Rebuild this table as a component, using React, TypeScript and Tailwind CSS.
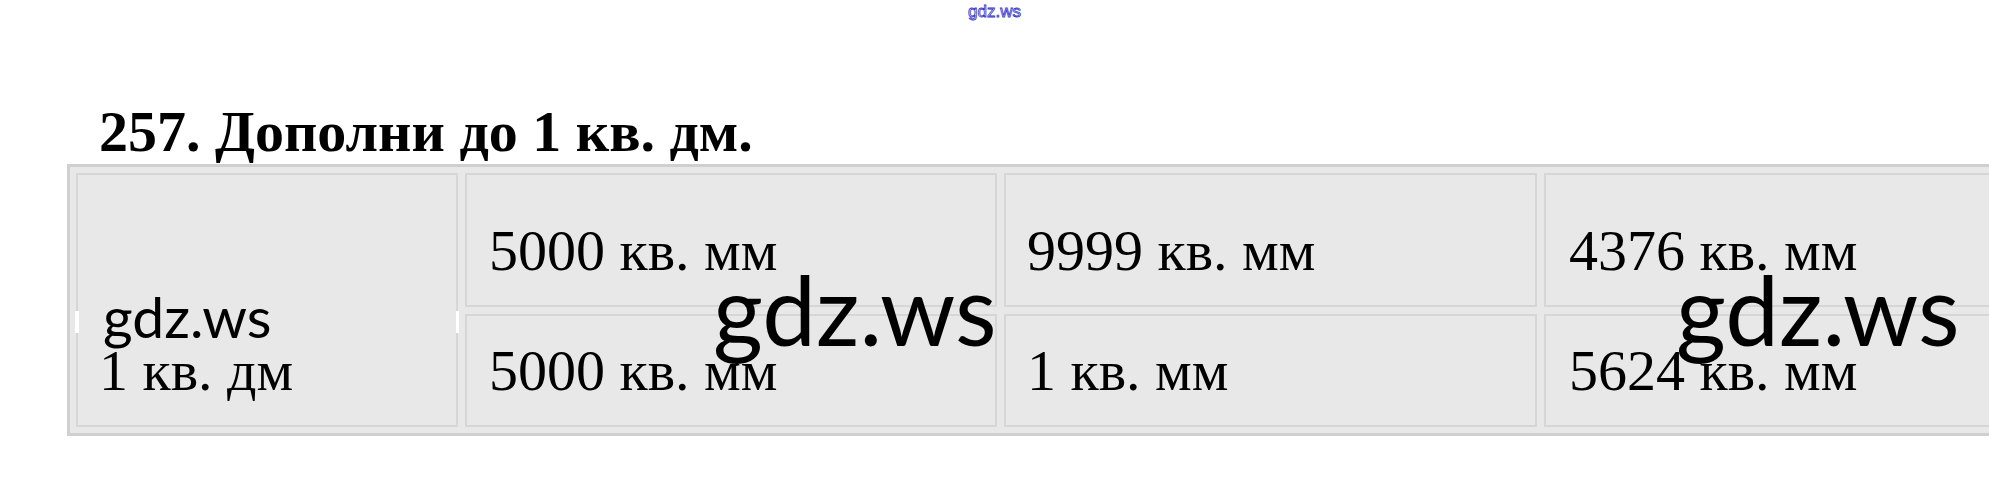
import React from "react";

const serif = { fontFamily: '"Liberation Serif", "Times New Roman", serif' };
const lato = { fontFamily: 'Lato, "Open Sans", sans-serif' };

const rows = [
  ["5000 кв. мм", "9999 кв. мм", "4376 кв. мм"],
  ["5000 кв. мм", "1 кв. мм", "5624 кв. мм"],
];

const padLeft = ["pl-[22px]", "pl-[21px]", "pl-[23px]"];

const Cell = ({ text, col }: { text: string; col: number }) => (
  <div
    className={`flex items-end border-2 border-[#d6d6d6] bg-[#e8e8e8] pb-[25px] ${padLeft[col]}`}
  >
    <span className="text-[58px] leading-[58px] text-black whitespace-nowrap" style={serif}>
      {text}
    </span>
  </div>
);

const App = () => {
  return (
    <div className="w-[1989px] h-[497px] bg-white overflow-hidden">
      <div className="h-[19px] pt-[2px] text-center text-[17px] leading-[17px]">
        <span
          className="text-[#e8e8ff] [-webkit-text-stroke:0.8px_#3434c8]"
          style={{ fontFamily: '"Liberation Sans", Arial, sans-serif' }}
        >
          gdz.ws
        </span>
      </div>

      <h1
        className="mt-[84px] ml-[99px] text-[58px] leading-[58px] font-bold text-black whitespace-nowrap"
        style={serif}
      >
        257. Дополни до 1 кв. дм.
      </h1>

      <div className="relative mt-[3px] ml-[67px] w-max border-[3px] border-[#cfcfcf] bg-[#e8e8e8] p-[6px]">
        <div className="grid grid-cols-[382px_532px_533px_531px] grid-rows-[134px_113px] gap-[7px]">
          <div className="relative row-span-2 flex flex-col justify-end border-2 border-[#d6d6d6] bg-[#e8e8e8] pb-[25px] pl-[21px]">
            <span className="pl-[4px] text-[57px] leading-[52px] text-black" style={lato}>
              gdz.ws
            </span>
            <span className="text-[58px] leading-[58px] text-black whitespace-nowrap" style={serif}>
              1 кв. дм
            </span>
            <span className="absolute left-[-3px] top-[136px] h-[22px] w-[4px] bg-white" />
            <span className="absolute right-[-3px] top-[136px] h-[22px] w-[3px] bg-white" />
          </div>
          <Cell text={rows[0][0]} col={0} />
          <Cell text={rows[0][1]} col={1} />
          <Cell text={rows[0][2]} col={2} />
          <Cell text={rows[1][0]} col={0} />
          <Cell text={rows[1][1]} col={1} />
          <Cell text={rows[1][2]} col={2} />
        </div>

        <span
          className="absolute left-[643px] top-[94px] text-[96px] leading-[96px] text-black"
          style={lato}
        >
          gdz.ws
        </span>
        <span
          className="absolute left-[1606px] top-[94px] text-[96px] leading-[96px] text-black"
          style={lato}
        >
          gdz.ws
        </span>
      </div>
    </div>
  );
};

export default App;
